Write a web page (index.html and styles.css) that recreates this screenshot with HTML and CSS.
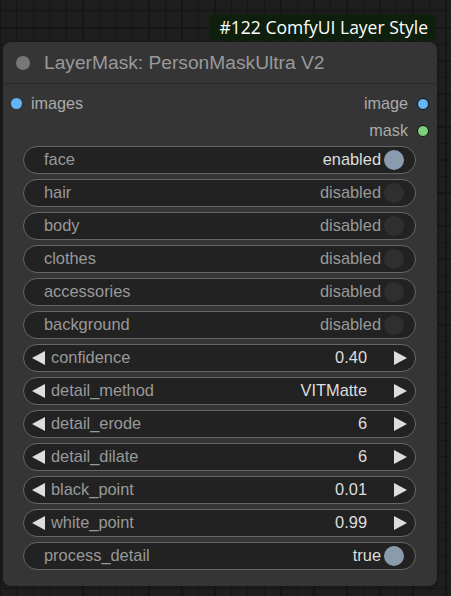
FILE: index.html
```html
<!DOCTYPE html>
<html>
<head>
<meta charset="utf-8">
<link rel="stylesheet" href="styles.css">
</head>
<body>
<div class="canvas">
  <div class="badge-row"><div class="badge">#122 ComfyUI Layer Style</div></div>
  <div class="node">
    <div class="title"><span class="title-dot"></span><span class="title-text">LayerMask: PersonMaskUltra V2</span></div>
    <div class="slots">
      <div class="slot-row">
        <div class="slot in"><span class="dot blue"></span><span>images</span></div>
        <div class="slot out"><span>image</span><span class="dot blue out-dot"></span></div>
      </div>
      <div class="slot-row">
        <div class="slot in"></div>
        <div class="slot out"><span>mask</span><span class="dot green out-dot"></span></div>
      </div>
    </div>
    <div class="widgets">
      <div class="w toggle"><span class="label">face</span><span class="val on">enabled</span><span class="knob on"></span></div>
      <div class="w toggle"><span class="label">hair</span><span class="val">disabled</span><span class="knob"></span></div>
      <div class="w toggle"><span class="label">body</span><span class="val">disabled</span><span class="knob"></span></div>
      <div class="w toggle"><span class="label">clothes</span><span class="val">disabled</span><span class="knob"></span></div>
      <div class="w toggle"><span class="label">accessories</span><span class="val">disabled</span><span class="knob"></span></div>
      <div class="w toggle"><span class="label">background</span><span class="val">disabled</span><span class="knob"></span></div>
      <div class="w num"><span class="arr left"></span><span class="label">confidence</span><span class="nval">0.40</span><span class="arr right"></span></div>
      <div class="w num"><span class="arr left"></span><span class="label">detail_method</span><span class="nval">VITMatte</span><span class="arr right"></span></div>
      <div class="w num"><span class="arr left"></span><span class="label">detail_erode</span><span class="nval">6</span><span class="arr right"></span></div>
      <div class="w num"><span class="arr left"></span><span class="label">detail_dilate</span><span class="nval">6</span><span class="arr right"></span></div>
      <div class="w num"><span class="arr left"></span><span class="label">black_point</span><span class="nval">0.01</span><span class="arr right"></span></div>
      <div class="w num"><span class="arr left"></span><span class="label">white_point</span><span class="nval">0.99</span><span class="arr right"></span></div>
      <div class="w toggle"><span class="label">process_detail</span><span class="val on">true</span><span class="knob on"></span></div>
    </div>
  </div>
</div>
</body>
</html>
```
FILE: styles.css
```css
html, body {
  margin: 0;
  padding: 0;
}
body {
  width: 451px;
  height: 596px;
  overflow: hidden;
  background-color: #1e1e1e;
  background-image:
    repeating-linear-gradient(90deg, #161616 0 1px, transparent 1px 16.5px),
    repeating-linear-gradient(0deg, #161616 0 1px, transparent 1px 16.5px);
  background-position: 0px 10px, 0px 10px;
  font-family: "Liberation Sans", Arial, sans-serif;
}
.canvas {
  padding: 14px 0 0 3px;
  width: 434px;
}
.badge-row {
  display: flex;
  justify-content: flex-end;
  padding-right: 1px;
  height: 28px;
}
.badge {
  height: 27px;
  line-height: 26px;
  padding: 0 8px 0 11px;
  background: #0e1f0e;
  border-radius: 6px;
  color: #ffffff;
  font-family: "Open Sans", "Noto Sans", sans-serif;
  font-size: 17.5px;
  letter-spacing: 0px;
}
.node {
  width: 434px;
  height: 544px;
  background: #353535;
  border-radius: 8px;
  box-shadow: 0 0 3px rgba(0,0,0,0.5);
  box-sizing: border-box;
}
.title {
  height: 41px;
  border-bottom: 1px solid #2b2b2b;
  display: flex;
  align-items: center;
}
.title-dot {
  width: 14px;
  height: 14px;
  border-radius: 50%;
  background: #777777;
  margin-left: 13px;
  margin-right: 14px;
}
.title-text {
  color: #999999;
  font-size: 19.2px;
}
.slots {
  padding-top: 6px;
}
.slot-row {
  height: 27px;
  display: flex;
  justify-content: space-between;
  align-items: center;
  color: #aaaaaa;
  font-size: 16.2px;
}
.slot {
  display: flex;
  align-items: center;
}
.slot.in {
  padding-left: 8px;
}
.slot.out {
  padding-right: 8px;
}
.dot {
  width: 10px;
  height: 10px;
  border-radius: 50%;
  box-sizing: border-box;
  border: 1px solid #111;
}
.slot.in .dot {
  margin-right: 9px;
  border: none;
  width: 11px;
  height: 11px;
}
.out-dot {
  margin-left: 9px;
  width: 12px;
  height: 12px;
}
.blue { background: #64b5f6; }
.green { background: #7ccf7c; }
.widgets {
  margin-top: 2px;
  padding: 0 21px 0 20px;
  display: flex;
  flex-direction: column;
  gap: 5px;
}
.w {
  height: 28px;
  box-sizing: border-box;
  border: 1px solid #666666;
  border-radius: 14px;
  background: #222222;
  display: flex;
  align-items: center;
  font-size: 16.4px;
  color: #999999;
  padding-bottom: 1px;
}
.w.toggle {
  padding: 0 11px 1px 20px;
}
.w .label {
  flex: 1;
}
.val {
  color: #999999;
  margin-right: 3px;
}
.val.on {
  color: #dddddd;
}
.knob {
  width: 20px;
  height: 20px;
  border-radius: 50%;
  background: #2f2f2f;
  margin-top: 1px;
}
.knob.on {
  background: #8a9bae;
}
.w.num {
  padding: 0 8px 1px 8px;
}
.arr {
  width: 0;
  height: 0;
  border-top: 7px solid transparent;
  border-bottom: 7px solid transparent;
  margin-top: 1px;
}
.arr.left {
  border-right: 13px solid #dddddd;
  margin-right: 6px;
}
.arr.right {
  border-left: 13px solid #dddddd;
  margin-left: 27px;
}
.nval {
  color: #dddddd;
}
```
